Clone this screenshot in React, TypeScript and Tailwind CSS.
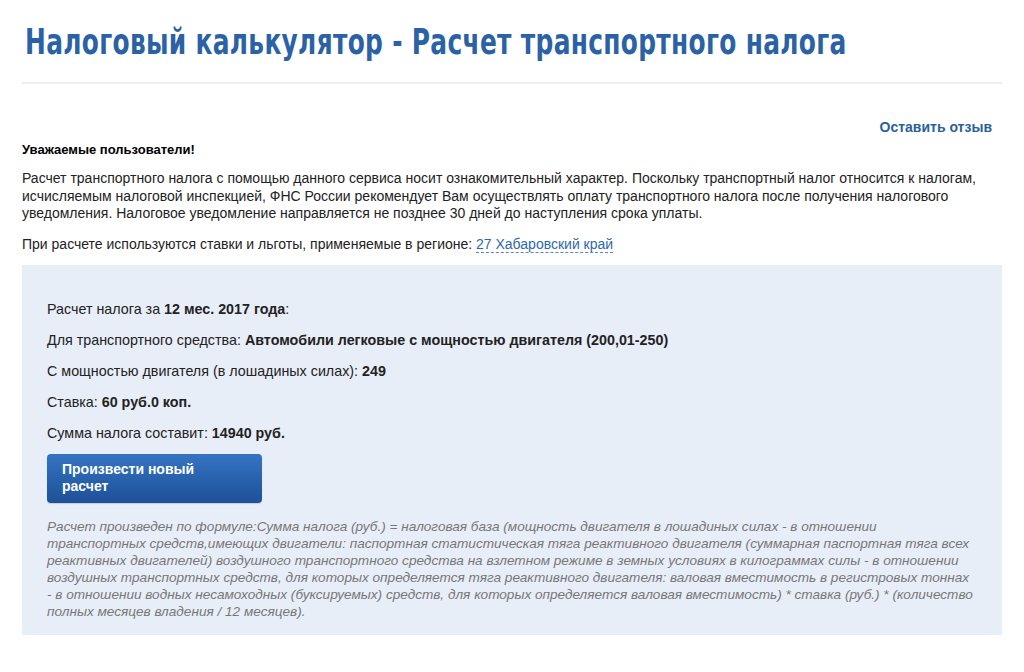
export default function App() {
  return (
    <div className="min-h-[672px] bg-white font-['Liberation_Sans',Arial,sans-serif] text-[#222]">
      <div className="px-[22px]">
        <h1 className="pt-[20px] pb-[18px] pl-[3px] font-['DejaVu_Sans_Condensed','DejaVu_Sans',sans-serif] text-[35px] font-bold leading-[44px] text-[#2b62a6] [font-stretch:condensed]">
          <span className="inline-block origin-left scale-x-[0.79] whitespace-nowrap tracking-[0.4px]">
            Налоговый калькулятор - Расчет транспортного налога
          </span>
        </h1>
        <div className="h-[2px] w-[980px] bg-[#eceef1]" />

        <div className="mt-[34px] flex justify-end pr-[10px]">
          <a href="#" className="text-[14px] font-bold leading-[18px] text-[#2d5f9b]">
            Оставить отзыв
          </a>
        </div>
        <p className="mt-[5px] text-[13px] font-bold leading-[18px] text-black">Уважаемые пользователи!</p>

        <p className="mt-[11px] w-[985px] text-[14px] leading-[17.5px]">
          Расчет транспортного налога с помощью данного сервиса носит ознакомительный характер. Поскольку транспортный налог относится к налогам, исчисляемым налоговой инспекцией, ФНС России рекомендует Вам осуществлять оплату транспортного налога после получения налогового уведомления. Налоговое уведомление направляется не позднее 30 дней до наступления срока уплаты.
        </p>
        <p className="mt-[12px] text-[14px] leading-[18px]">
          При расчете используются ставки и льготы, применяемые в регионе:{" "}
          <a href="#" className="border-b border-dashed border-[#5a86bf] text-[#2f68ad]">
            27 Хабаровский край
          </a>
        </p>

        <div className="mt-[12px] w-[980px] bg-[#e8eef8] px-[25px] pt-[35px] pb-[15px]">
          <div className="flex flex-col gap-[13px] text-[14.3px] leading-[18px]">
            <p>
              Расчет налога за <b>12 мес. 2017 года</b>:
            </p>
            <p>
              Для транспортного средства: <b>Автомобили легковые с мощностью двигателя (200,01-250)</b>
            </p>
            <p>
              С мощностью двигателя (в лошадиных силах): <b>249</b>
            </p>
            <p>
              Ставка: <b>60 руб.0 коп.</b>
            </p>
            <p>
              Сумма налога составит: <b>14940 руб.</b>
            </p>
          </div>
          <button className="mt-[12px] flex h-[49px] w-[215px] flex-col justify-center rounded-[4px] bg-gradient-to-b from-[#3574c3] to-[#1d5198] px-[15px] text-left text-[14px] font-bold leading-[17px] text-white shadow-[0_1px_1px_rgba(0,0,0,0.15)]">
            <span>Произвести новый</span>
            <span>расчет</span>
          </button>
          <p className="mt-[15px] w-[930px] text-[13.6px] italic leading-[17px] text-[#777]">
            Расчет произведен по формуле:Сумма налога (руб.) = налоговая база (мощность двигателя в лошадиных силах - в отношении транспортных средств,имеющих двигатели: паспортная статистическая тяга реактивного двигателя (суммарная паспортная тяга всех реактивных двигателей) воздушного транспортного средства на взлетном режиме в земных условиях в килограммах силы - в отношении воздушных транспортных средств, для которых определяется тяга реактивного двигателя: валовая вместимость в регистровых тоннах - в отношении водных несамоходных (буксируемых) средств, для которых определяется валовая вместимость) * ставка (руб.) * (количество полных месяцев владения / 12 месяцев).
          </p>
        </div>
      </div>
    </div>
  );
}
